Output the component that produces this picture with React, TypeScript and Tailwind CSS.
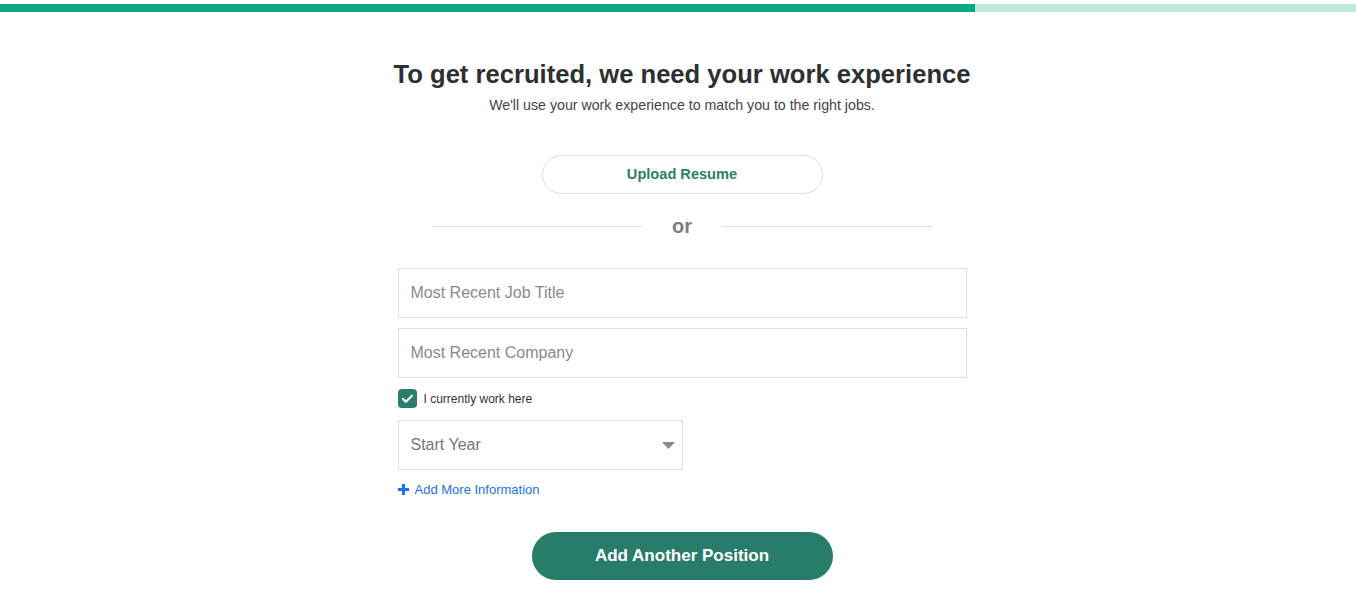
import React from "react";

export default function App() {
  const [current, setCurrent] = React.useState(true);

  return (
    <div className="min-h-[596px] bg-white font-['Liberation_Sans',Arial,sans-serif]">
      {/* progress bar */}
      <div className="pt-1">
        <div className="flex h-2 w-full bg-[#c3eadf]">
          <div className="h-full w-[975px] bg-[#0ba882]" />
        </div>
      </div>

      <div className="mx-auto flex w-[577px] flex-col items-center pl-2">
        <h1 className="mt-[47px] whitespace-nowrap text-[25.6px] font-bold leading-[30px] text-[#2d3033]">
          To get recruited, we need your work experience
        </h1>
        <p className="mt-[8px] whitespace-nowrap text-[14.2px] leading-[17px] text-[#444]">
          We'll use your work experience to match you to the right jobs.
        </p>

        <button
          type="button"
          className="mt-[41px] h-[39px] w-[281px] rounded-full border border-[#ddd] bg-white text-[14.6px] font-bold text-[#2a7f6a]"
        >
          Upload Resume
        </button>

        <div className="mt-[20px] flex w-[500px] items-center">
          <div className="h-px flex-1 bg-[#ddd]" />
          <span className="px-[30px] text-[20px] font-bold leading-6 text-[#7a7f85]">
            or
          </span>
          <div className="h-px flex-1 bg-[#ddd]" />
        </div>

        <div className="mt-[30px] flex w-full flex-col gap-[10px]">
          <input
            type="text"
            placeholder="Most Recent Job Title"
            className="h-[50px] w-full border border-[#ddd] px-3 text-[16px] text-[#333] outline-none placeholder:text-[#8a8a8a]"
          />
          <input
            type="text"
            placeholder="Most Recent Company"
            className="h-[50px] w-full border border-[#ddd] px-3 text-[16px] text-[#333] outline-none placeholder:text-[#8a8a8a]"
          />
        </div>

        <label className="mt-[11px] flex w-full cursor-pointer items-center gap-[7px]">
          <span
            onClick={() => setCurrent(!current)}
            className={`flex h-[19px] w-[19px] items-center justify-center rounded-[4px] ${current ? "bg-[#2a7f6a]" : "border border-[#aaa] bg-white"}`}
          >
            {current && (
              <svg width="13" height="13" viewBox="0 0 16 16">
                <path
                  d="M2.5 8.5l3.5 3.5 7.5-7.5"
                  fill="none"
                  stroke="white"
                  strokeWidth="2.6"
                  strokeLinecap="round"
                  strokeLinejoin="round"
                />
              </svg>
            )}
          </span>
          <span className="text-[12px] text-[#333]">I currently work here</span>
        </label>

        <div className="mt-[12px] flex w-full">
          <div className="relative h-[50px] w-[285px] border border-[#ddd]">
            <select className="h-full w-full appearance-none bg-white px-3 text-[16px] text-[#777] outline-none">
              <option>Start Year</option>
            </select>
            <svg
              className="pointer-events-none absolute right-[7px] top-[21px]"
              width="13"
              height="7"
              viewBox="0 0 13 7"
            >
              <path d="M0 0h13L6.5 7z" fill="#888" />
            </svg>
          </div>
        </div>

        <div className="mt-[10px] flex w-full items-center gap-[6px] text-[13px] text-[#1a73e8]">
          <svg width="11" height="11" viewBox="0 0 11 11">
            <path d="M4 0h3v4h4v3H7v4H4V7H0V4h4z" fill="#1a73e8" />
          </svg>
          <span>Add More Information</span>
        </div>

        <button
          type="button"
          className="mt-[32px] h-[48px] w-[301px] rounded-full bg-[#277d69] text-[17px] font-bold text-white"
        >
          Add Another Position
        </button>
      </div>
    </div>
  );
}
